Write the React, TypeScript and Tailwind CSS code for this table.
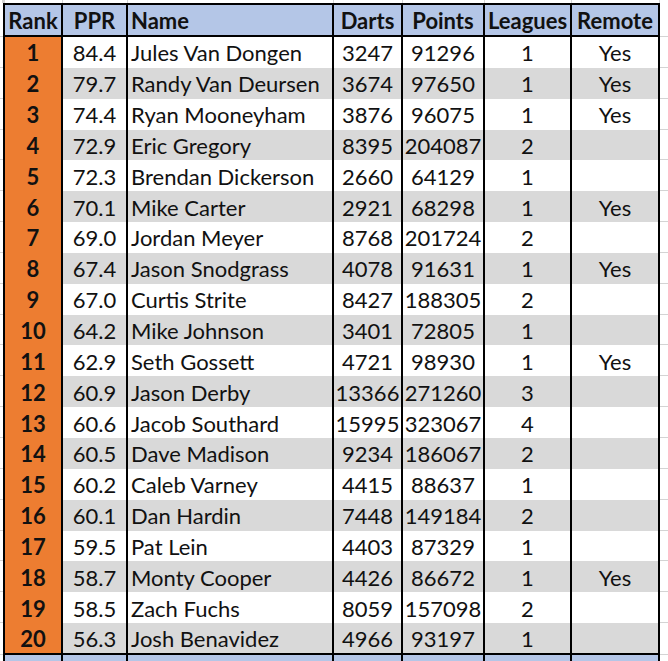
import React from "react";

type Player = {
  rank: number;
  ppr: string;
  name: string;
  darts: number;
  points: number;
  leagues: number;
  remote?: boolean;
};

const players: Player[] = [
  { rank: 1, ppr: "84.4", name: "Jules Van Dongen", darts: 3247, points: 91296, leagues: 1, remote: true },
  { rank: 2, ppr: "79.7", name: "Randy Van Deursen", darts: 3674, points: 97650, leagues: 1, remote: true },
  { rank: 3, ppr: "74.4", name: "Ryan Mooneyham", darts: 3876, points: 96075, leagues: 1, remote: true },
  { rank: 4, ppr: "72.9", name: "Eric Gregory", darts: 8395, points: 204087, leagues: 2 },
  { rank: 5, ppr: "72.3", name: "Brendan Dickerson", darts: 2660, points: 64129, leagues: 1 },
  { rank: 6, ppr: "70.1", name: "Mike Carter", darts: 2921, points: 68298, leagues: 1, remote: true },
  { rank: 7, ppr: "69.0", name: "Jordan Meyer", darts: 8768, points: 201724, leagues: 2 },
  { rank: 8, ppr: "67.4", name: "Jason Snodgrass", darts: 4078, points: 91631, leagues: 1, remote: true },
  { rank: 9, ppr: "67.0", name: "Curtis Strite", darts: 8427, points: 188305, leagues: 2 },
  { rank: 10, ppr: "64.2", name: "Mike Johnson", darts: 3401, points: 72805, leagues: 1 },
  { rank: 11, ppr: "62.9", name: "Seth Gossett", darts: 4721, points: 98930, leagues: 1, remote: true },
  { rank: 12, ppr: "60.9", name: "Jason Derby", darts: 13366, points: 271260, leagues: 3 },
  { rank: 13, ppr: "60.6", name: "Jacob Southard", darts: 15995, points: 323067, leagues: 4 },
  { rank: 14, ppr: "60.5", name: "Dave Madison", darts: 9234, points: 186067, leagues: 2 },
  { rank: 15, ppr: "60.2", name: "Caleb Varney", darts: 4415, points: 88637, leagues: 1 },
  { rank: 16, ppr: "60.1", name: "Dan Hardin", darts: 7448, points: 149184, leagues: 2 },
  { rank: 17, ppr: "59.5", name: "Pat Lein", darts: 4403, points: 87329, leagues: 1 },
  { rank: 18, ppr: "58.7", name: "Monty Cooper", darts: 4426, points: 86672, leagues: 1, remote: true },
  { rank: 19, ppr: "58.5", name: "Zach Fuchs", darts: 8059, points: 157098, leagues: 2 },
  { rank: 20, ppr: "56.3", name: "Josh Benavidez", darts: 4966, points: 93197, leagues: 1 },
];

// column widths include the 2px black divider on the right
const cols = [
  { label: "Rank", w: "w-[60px] border-l-2", align: "justify-center" },
  { label: "PPR", w: "w-[65px]", align: "justify-center" },
  { label: "Name", w: "w-[206px]", align: "justify-start pl-[3px]" },
  { label: "Darts", w: "w-[69px]", align: "justify-center" },
  { label: "Points", w: "w-[82px]", align: "justify-center" },
  { label: "Leagues", w: "w-[87px]", align: "justify-center" },
  { label: "Remote", w: "w-[88px]", align: "justify-center" },
];

const gutterL = "w-[3px] shrink-0 border-b border-[#d4d4d4]";
const gutterR = "flex-1 border-b border-[#d4d4d4]";

const Header = () => (
  <div className="flex h-[34px]">
    <div className={gutterL} />
    {cols.map((c) => (
      <div
        key={c.label}
        className={`${c.w} ${c.align} flex items-center shrink-0 border-r-2 border-t-2 border-b-2 border-black bg-[#b4c6e7] font-bold whitespace-nowrap pt-[1px]`}
      >
        {c.label}
      </div>
    ))}
    <div className={gutterR} />
  </div>
);

const Row = ({ p, last }: { p: Player; last: boolean }) => {
  const bg = p.rank % 2 === 0 ? "bg-[#d9d9d9]" : "bg-white";
  const cells = [
    p.rank,
    p.ppr,
    p.name,
    p.darts,
    p.points,
    p.leagues,
    p.remote ? "Yes" : "",
  ];
  return (
    <div className={last ? "flex h-[32px]" : "flex h-[30.85px]"}>
      <div className={gutterL} />
      {cols.map((c, i) => (
        <div
          key={c.label}
          className={`${c.w} ${c.align} flex items-center shrink-0 border-r-2 border-black whitespace-nowrap pt-[2px] ${
            last ? "border-b-2" : ""
          } ${i === 0 ? "bg-[#ed7d31] font-bold" : bg}`}
        >
          {cells[i]}
        </div>
      ))}
      <div className={gutterR} />
    </div>
  );
};

const App = () => {
  return (
    <div
      className="w-[668px] h-[661px] overflow-hidden bg-white text-[#111] text-[22px] leading-none"
      style={{ fontFamily: "Lato, 'Open Sans', sans-serif" }}
    >
      <div className="flex h-[3px]">
        <div className="w-[3px] shrink-0 border-r border-[#d4d4d4]" />
        {cols.map((c) => (
          <div key={c.label} className={`${c.w} shrink-0 border-r border-[#d4d4d4]`} />
        ))}
      </div>
      <Header />
      {players.map((p, i) => (
        <Row key={p.rank} p={p} last={i === players.length - 1} />
      ))}
      <div className="flex h-[8px]">
        <div className="w-[3px] shrink-0" />
        {cols.map((c) => (
          <div key={c.label} className={`${c.w} shrink-0 border-r-2 border-black bg-[#b4c6e7] ${c.label === "Rank" ? "border-l-2" : ""}`} />
        ))}
      </div>
    </div>
  );
};

export default App;
